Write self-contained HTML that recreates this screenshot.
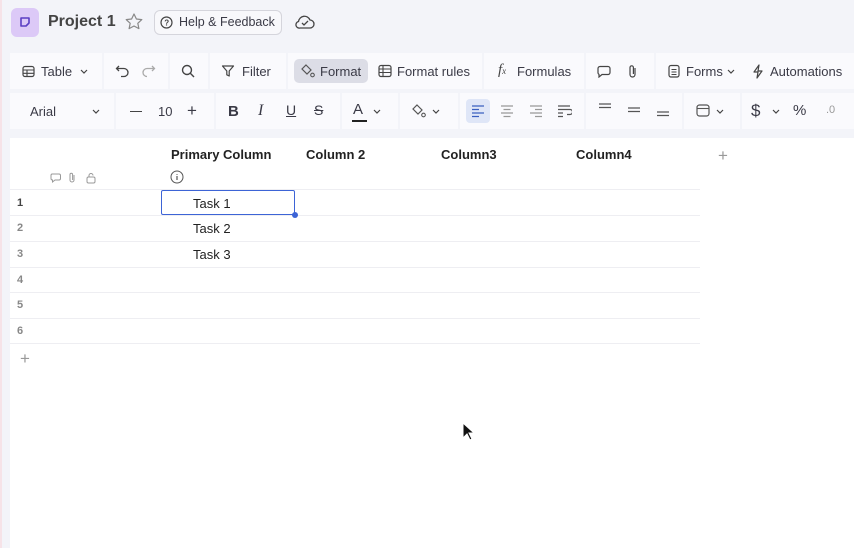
<!DOCTYPE html>
<html><head><style>
*{margin:0;padding:0;box-sizing:border-box}
body{width:854px;height:548px;background:#f3f4f9;font-family:"Liberation Sans",sans-serif;position:relative;overflow:hidden;color:#333}
.a{position:absolute}
.t{font-size:13px;color:#3a3a46;white-space:nowrap}
.box{position:absolute;background:#fafafd;}
svg{position:absolute}
.rn{position:absolute;left:17px;font-size:11px;color:#888;font-weight:bold}
.hl{position:absolute;left:10px;width:690px;height:1px;background:#eeeef2}
.hd{position:absolute;top:147px;font-size:13px;font-weight:bold;color:#222}
.cv{position:absolute;width:8px;height:5px}
</style></head><body>
<div class="a" style="left:0;top:0;width:2px;height:548px;background:#f6e3e8"></div>
<div class="a" style="left:11px;top:8px;width:28px;height:29px;border-radius:6px;background:#dcc9f7"></div>
<svg style="left:19px;top:16px" width="12" height="12" viewBox="0 0 12 12"><path d="M2 2h8v5l-3 3H2z" fill="none" stroke="#5b3fc4" stroke-width="1.6" stroke-linejoin="round"/></svg>
<div class="a" style="left:48px;top:13px;font-size:16px;font-weight:bold;color:#444">Project 1</div>
<svg style="left:124px;top:12px" width="20" height="20" viewBox="0 0 20 20"><path d="M10 2l2.4 5 5.4.6-4 3.7 1.1 5.3L10 14l-4.9 2.6 1.1-5.3-4-3.7 5.4-.6z" fill="none" stroke="#888" stroke-width="1.2" stroke-linejoin="round"/></svg>
<div class="a" style="left:154px;top:10px;width:128px;height:25px;border:1px solid #d5d5dc;border-radius:6px;background:#f8f8fb"></div>
<svg style="left:160px;top:16px" width="13" height="13" viewBox="0 0 13 13"><circle cx="6.5" cy="6.5" r="5.5" fill="none" stroke="#444" stroke-width="1.2"/><text x="4.2" y="9.5" font-size="8" font-weight="bold" fill="#444" font-family="Liberation Sans">?</text></svg>
<div class="a t" style="left:179px;top:15px;font-size:12.5px">Help &amp; Feedback</div>
<svg style="left:294px;top:13px" width="22" height="18" viewBox="0 0 22 18"><path d="M6 15h10a4 4 0 0 0 0-8 6 6 0 0 0-11.5 1.5A3.3 3.3 0 0 0 6 15z" fill="none" stroke="#444" stroke-width="1.3"/><path d="M8 10l2 2 4-4" fill="none" stroke="#444" stroke-width="1.3"/></svg>
<div class="box" style="left:10px;top:53px;width:92px;height:36px"></div>
<div class="box" style="left:104px;top:53px;width:64px;height:36px"></div>
<div class="box" style="left:170px;top:53px;width:38px;height:36px"></div>
<div class="box" style="left:210px;top:53px;width:76px;height:36px"></div>
<div class="box" style="left:288px;top:53px;width:194px;height:36px"></div>
<div class="box" style="left:484px;top:53px;width:100px;height:36px"></div>
<div class="box" style="left:586px;top:53px;width:68px;height:36px"></div>
<div class="box" style="left:656px;top:53px;width:198px;height:36px"></div>
<div class="a" style="left:294px;top:59px;width:74px;height:24px;border-radius:5px;background:#dcdde6"></div>
<svg style="left:22px;top:65px" width="13" height="13" viewBox="0 0 13 13"><rect x="1" y="1.5" width="11" height="10" rx="2" fill="none" stroke="#444" stroke-width="1.2"/><path d="M1 5h11M1 8.3h11M5 5v6.5" stroke="#444" stroke-width="1.1"/></svg>
<div class="a t" style="left:41px;top:64px">Table</div>
<svg class="cv" style="left:80px;top:69px" viewBox="0 0 8 5"><path d="M1 1l3 3 3-3" fill="none" stroke="#444" stroke-width="1.2"/></svg>
<svg style="left:115px;top:64px" width="16" height="14" viewBox="0 0 16 14"><path d="M4 2L1.5 4.5 4 7M1.5 4.5H9a4 4 0 0 1 0 8H6" fill="none" stroke="#444" stroke-width="1.3"/></svg>
<svg style="left:140px;top:64px" width="16" height="14" viewBox="0 0 16 14"><path d="M12 2l2.5 2.5L12 7M14.5 4.5H7a4 4 0 0 0 0 8" fill="none" stroke="#aaa" stroke-width="1.3"/></svg>
<svg style="left:181px;top:64px" width="14" height="14" viewBox="0 0 14 14"><circle cx="6" cy="6" r="4.5" fill="none" stroke="#444" stroke-width="1.4"/><path d="M9.3 9.3L13 13" stroke="#444" stroke-width="1.4"/></svg>
<svg style="left:221px;top:64px" width="14" height="14" viewBox="0 0 14 14"><path d="M1.5 2h11l-4.3 5v5l-2.4-1.2V7z" fill="none" stroke="#444" stroke-width="1.2" stroke-linejoin="round"/></svg>
<div class="a t" style="left:242px;top:64px">Filter</div>
<svg style="left:301px;top:64px" width="14" height="14" viewBox="0 0 14 14"><path d="M5 1l5 5-4 4-5-5z" fill="none" stroke="#555" stroke-width="1.2"/><circle cx="11.5" cy="11" r="1.8" fill="none" stroke="#555" stroke-width="1.1"/></svg>
<div class="a t" style="left:320px;top:64px">Format</div>
<svg style="left:378px;top:64px" width="14" height="14" viewBox="0 0 14 14"><rect x="1" y="1.5" width="12" height="11" rx="2" fill="none" stroke="#444" stroke-width="1.2"/><path d="M1 5h12M1 8.5h12M5 1.5v11" stroke="#444" stroke-width="1.1"/></svg>
<div class="a t" style="left:397px;top:64px">Format rules</div>
<div class="a" style="left:498px;top:62px;font-family:'Liberation Serif',serif;font-style:italic;font-size:15px;color:#444">f<span style="font-size:9px">x</span></div>
<div class="a t" style="left:517px;top:64px">Formulas</div>
<svg style="left:597px;top:65px" width="14" height="13" viewBox="0 0 14 13"><path d="M3 1.5h8a2 2 0 0 1 2 2v4a2 2 0 0 1-2 2H5l-3 2.5v-2.6A2 2 0 0 1 1 7.5v-4a2 2 0 0 1 2-2z" fill="none" stroke="#444" stroke-width="1.2"/></svg>
<svg style="left:627px;top:64px" width="12" height="15" viewBox="0 0 12 15"><path d="M8 4v6.5a2.5 2.5 0 0 1-5 0V3.5a1.7 1.7 0 0 1 3.4 0V10" fill="none" stroke="#444" stroke-width="1.2"/></svg>
<svg style="left:668px;top:64px" width="12" height="14" viewBox="0 0 12 14"><rect x="1" y="1.5" width="10" height="11.5" rx="2" fill="none" stroke="#444" stroke-width="1.2"/><path d="M3.5 5.5h5M3.5 8h5M3.5 10.5h5" stroke="#444" stroke-width="1"/></svg>
<div class="a t" style="left:686px;top:64px">Forms</div>
<svg class="cv" style="left:727px;top:69px" viewBox="0 0 8 5"><path d="M1 1l3 3 3-3" fill="none" stroke="#444" stroke-width="1.2"/></svg>
<svg style="left:752px;top:64px" width="12" height="15" viewBox="0 0 12 15"><path d="M7 1L2 8h4l-1 6 5-7H6z" fill="none" stroke="#444" stroke-width="1.2" stroke-linejoin="round"/></svg>
<div class="a t" style="left:770px;top:64px">Automations</div>
<div class="box" style="left:10px;top:93px;width:104px;height:36px"></div>
<div class="box" style="left:116px;top:93px;width:98px;height:36px"></div>
<div class="box" style="left:216px;top:93px;width:124px;height:36px"></div>
<div class="box" style="left:342px;top:93px;width:56px;height:36px"></div>
<div class="box" style="left:400px;top:93px;width:58px;height:36px"></div>
<div class="box" style="left:460px;top:93px;width:124px;height:36px"></div>
<div class="box" style="left:586px;top:93px;width:96px;height:36px"></div>
<div class="box" style="left:684px;top:93px;width:56px;height:36px"></div>
<div class="box" style="left:742px;top:93px;width:112px;height:36px"></div>
<div class="a t" style="left:30px;top:104px">Arial</div>
<svg class="cv" style="left:92px;top:109px" viewBox="0 0 8 5"><path d="M1 1l3 3 3-3" fill="none" stroke="#444" stroke-width="1.2"/></svg>
<div class="a" style="left:130px;top:111px;width:12px;height:1.4px;background:#444"></div>
<div class="a t" style="left:158px;top:104px">10</div>
<div class="a t" style="left:187px;top:101px;font-size:17px">+</div>
<div class="a t" style="left:228px;top:103px;font-weight:bold;font-size:15px">B</div>
<div class="a t" style="left:258px;top:102px;font-style:italic;font-size:16px;font-family:'Liberation Serif',serif">I</div>
<div class="a t" style="left:286px;top:102px;text-decoration:underline;font-size:14px">U</div>
<div class="a t" style="left:314px;top:102px;text-decoration:line-through;font-size:14px">S</div>
<div class="a t" style="left:353px;top:101px;font-size:15px">A</div>
<div class="a" style="left:352px;top:120px;width:15px;height:2px;background:#222"></div>
<svg class="cv" style="left:373px;top:109px" viewBox="0 0 8 5"><path d="M1 1l3 3 3-3" fill="none" stroke="#444" stroke-width="1.2"/></svg>
<svg style="left:412px;top:104px" width="14" height="14" viewBox="0 0 14 14"><path d="M5 1l5 5-4 4-5-5z" fill="none" stroke="#555" stroke-width="1.2"/><circle cx="11.5" cy="11" r="1.8" fill="none" stroke="#555" stroke-width="1.1"/></svg>
<svg class="cv" style="left:432px;top:109px" viewBox="0 0 8 5"><path d="M1 1l3 3 3-3" fill="none" stroke="#444" stroke-width="1.2"/></svg>
<div class="a" style="left:466px;top:99px;width:24px;height:24px;border-radius:4px;background:#dfe6f7"></div>
<svg style="left:471px;top:104px" width="14" height="14" viewBox="0 0 14 14"><path d="M1 2h12M1 5.5h7M1 9h12M1 12.5h7" stroke="#3b5fc0" stroke-width="1.3"/></svg>
<svg style="left:500px;top:104px" width="14" height="14" viewBox="0 0 14 14"><path d="M1 2h12M3.5 5.5h7M1 9h12M3.5 12.5h7" stroke="#999" stroke-width="1.2"/></svg>
<svg style="left:529px;top:104px" width="14" height="14" viewBox="0 0 14 14"><path d="M1 2h12M6 5.5h7M1 9h12M6 12.5h7" stroke="#999" stroke-width="1.2"/></svg>
<svg style="left:557px;top:104px" width="15" height="14" viewBox="0 0 15 14"><path d="M1 2h12M1 5.5h12a2.5 2.5 0 0 1 0 5h-3M1 9h5M1 12.5h5" fill="none" stroke="#555" stroke-width="1.2"/></svg>
<svg style="left:598px;top:102px" width="14" height="10" viewBox="0 0 14 10"><path d="M1 2h12M1 5.5h12" stroke="#555" stroke-width="1.3"/></svg>
<svg style="left:627px;top:106px" width="14" height="10" viewBox="0 0 14 10"><path d="M1 2h12M1 5.5h12" stroke="#555" stroke-width="1.3"/></svg>
<svg style="left:656px;top:110px" width="14" height="10" viewBox="0 0 14 10"><path d="M1 2h12M1 5.5h12" stroke="#555" stroke-width="1.3"/></svg>
<svg style="left:696px;top:104px" width="14" height="13" viewBox="0 0 14 13"><rect x="1" y="1" width="12" height="11" rx="2.5" fill="none" stroke="#555" stroke-width="1.2"/><path d="M1 4.5h12" stroke="#555" stroke-width="1.1"/></svg>
<svg class="cv" style="left:716px;top:109px" viewBox="0 0 8 5"><path d="M1 1l3 3 3-3" fill="none" stroke="#444" stroke-width="1.2"/></svg>
<div class="a t" style="left:751px;top:101px;font-size:17px">$</div>
<svg class="cv" style="left:772px;top:109px" viewBox="0 0 8 5"><path d="M1 1l3 3 3-3" fill="none" stroke="#444" stroke-width="1.2"/></svg>
<div class="a t" style="left:793px;top:102px;font-size:15px">%</div>
<div class="a t" style="left:826px;top:104px;font-size:11px;color:#999">.0</div>
<div class="a" style="left:10px;top:138px;width:844px;height:410px;background:#fff"></div>
<div class="hd" style="left:171px">Primary Column</div>
<div class="hd" style="left:306px">Column 2</div>
<div class="hd" style="left:441px">Column3</div>
<div class="hd" style="left:576px">Column4</div>
<div class="a t" style="left:718px;top:146px;font-size:17px;color:#999">+</div>
<svg style="left:50px;top:172px" width="50" height="12" viewBox="0 0 50 12"><path d="M2 2h7a1.5 1.5 0 0 1 1.5 1.5v3A1.5 1.5 0 0 1 9 8H5l-2.5 2V8A1.5 1.5 0 0 1 1 6.5v-3A1.5 1.5 0 0 1 2 2z" fill="none" stroke="#999" stroke-width="1"/><path d="M24 3v5a2 2 0 0 1-4 0V2.5a1.3 1.3 0 0 1 2.6 0V8" fill="none" stroke="#999" stroke-width="1"/><rect x="37" y="5" width="8" height="6" rx="1.5" fill="none" stroke="#999" stroke-width="1"/><path d="M39 5V3.5a2 2 0 0 1 4 0" fill="none" stroke="#999" stroke-width="1"/></svg>
<svg style="left:170px;top:170px" width="14" height="14" viewBox="0 0 14 14"><circle cx="7" cy="7" r="6" fill="none" stroke="#555" stroke-width="1"/><path d="M7 6v4M7 4v.8" stroke="#555" stroke-width="1.2"/></svg>
<div class="hl" style="top:189px"></div>
<div class="hl" style="top:215px"></div>
<div class="hl" style="top:241px"></div>
<div class="hl" style="top:267px"></div>
<div class="hl" style="top:292px"></div>
<div class="hl" style="top:318px"></div>
<div class="hl" style="top:343px"></div>
<div class="rn" style="top:197px;color:#444">1</div>
<div class="rn" style="top:222px">2</div>
<div class="rn" style="top:248px">3</div>
<div class="rn" style="top:274px">4</div>
<div class="rn" style="top:299px">5</div>
<div class="rn" style="top:325px">6</div>
<div class="a" style="left:161px;top:190px;width:134px;height:25px;border:1.5px solid #3d64d6;border-radius:2px"></div>
<div class="a" style="left:292px;top:212px;width:6px;height:6px;border-radius:50%;background:#3d64d6"></div>
<div class="a t" style="left:193px;top:196px;color:#222">Task 1</div>
<div class="a t" style="left:193px;top:221px;color:#222">Task 2</div>
<div class="a t" style="left:193px;top:247px;color:#222">Task 3</div>
<div class="a t" style="left:20px;top:349px;font-size:17px;color:#999">+</div>
<svg style="left:461px;top:422px" width="14" height="20" viewBox="0 0 14 20"><path d="M2 1v15l4-4 3 6 2-1-3-6h5z" fill="#111" stroke="#fff" stroke-width="1"/></svg>
</body></html>
